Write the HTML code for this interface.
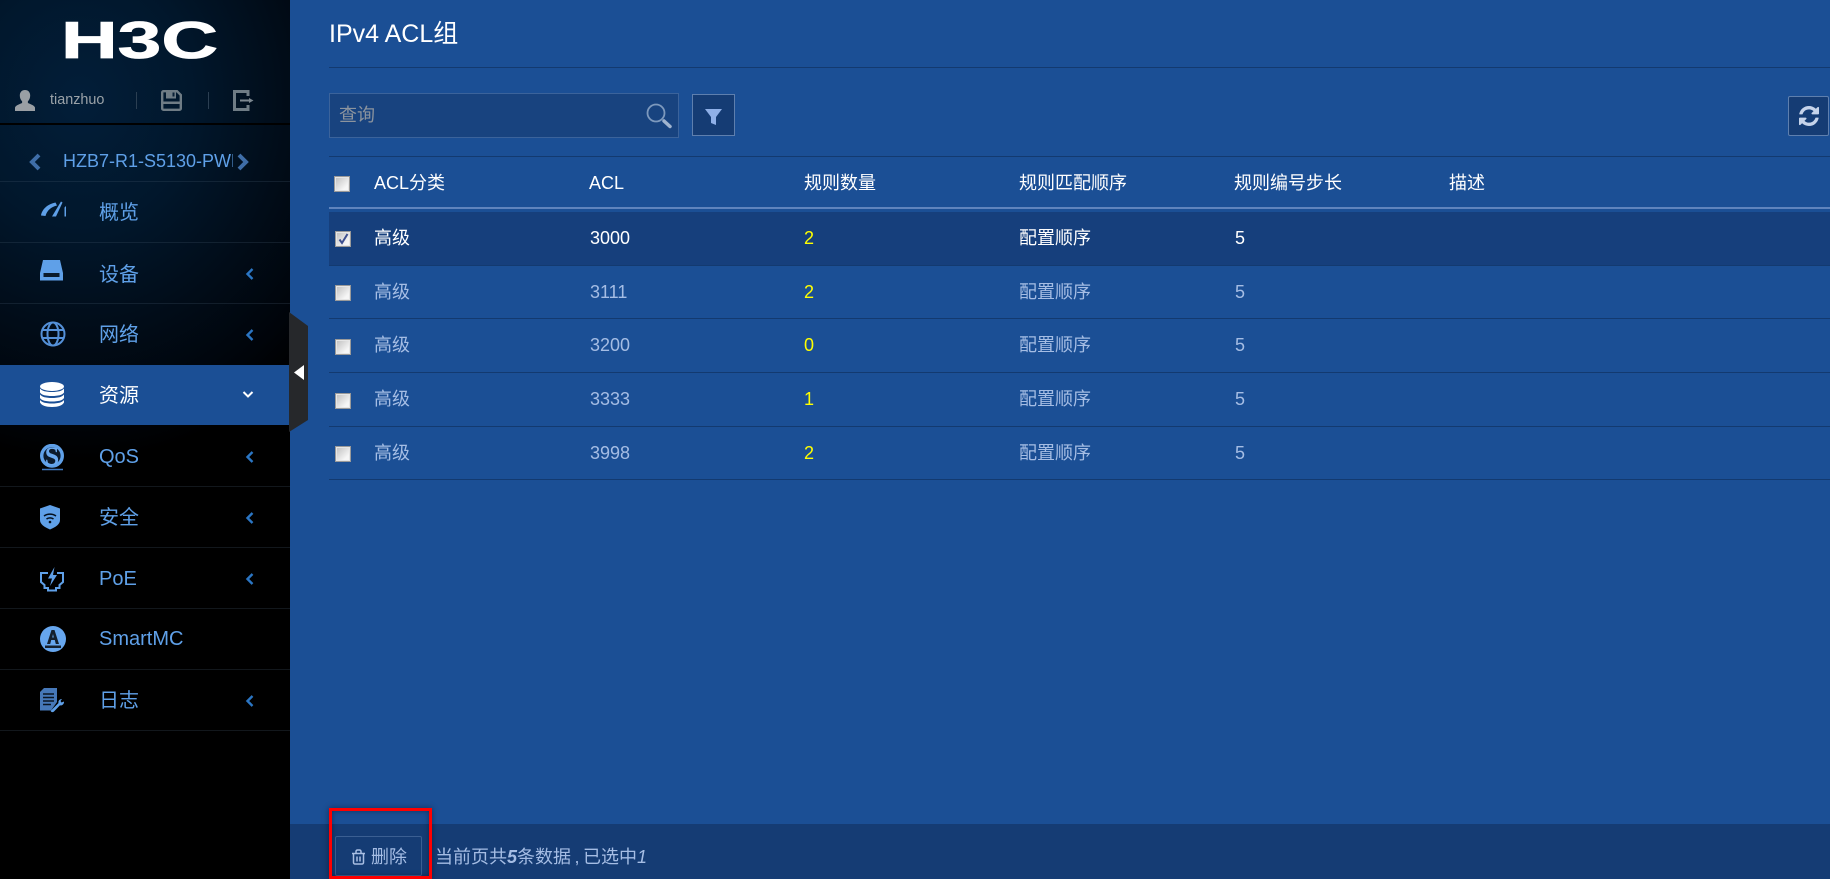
<!DOCTYPE html>
<html lang="zh">
<head>
<meta charset="utf-8">
<title>IPv4 ACL组</title>
<style>
*{box-sizing:border-box}
html,body{margin:0;padding:0;width:1830px;height:879px;overflow:hidden;background:#1b4f95;font-family:"Liberation Sans","Noto Sans CJK SC",sans-serif}
.a{position:absolute;white-space:nowrap}
#side{position:absolute;left:0;top:0;width:290px;height:879px;background:radial-gradient(ellipse 320px 360px at 80px 100px,#021e39 0%,#01172c 35%,#010c18 65%,#00040a 88%,#000 100%),#000}
.div{position:absolute;left:0;width:290px;height:1px;background:rgba(70,90,110,.26)}
.nav{position:absolute;left:99px;font-size:20px;line-height:24px;color:#5fa0e8}
.ar{position:absolute;left:245px}
.ic{position:absolute;left:40px}
.th{position:absolute;top:171px;font-size:18px;line-height:24px;color:#fff}
.td{position:absolute;font-size:18px;line-height:24px;color:#a5bde4}
.sel{color:#fff}
.y{color:#ffff00}
.ln{position:absolute;left:329px;width:1501px;height:1px;background:#133a70}
.cb{position:absolute;left:335px;width:16px;height:16px;border:1px solid #9a9a9a;background:linear-gradient(135deg,#bdbdbd,#f6f6f6 75%);box-shadow:inset 0 0 0 1px #e6e6e6}
</style>
</head>
<body>
<div id="side">
  <svg class="a" style="left:65px;top:21px;overflow:visible" width="150" height="37" viewBox="0 0 150 37"><text x="-4" y="37" font-family="Liberation Sans" font-weight="700" font-size="52" fill="#fff" stroke="#fff" stroke-width=".8" textLength="157" lengthAdjust="spacingAndGlyphs">H3C</text></svg>

  <svg class="a" style="left:15px;top:90px" width="20" height="21" viewBox="0 0 20 21"><path d="M10 0c3.200 0 5.200 2.300 5.200 5.500 0 2.500-1 4.500-2.300 5.800v1.700c2 1 6.100 2 7.100 4.500V21H0v-3.500c1-2.500 5.100-3.500 7.100-4.500v-1.700C5.800 10 4.800 8 4.800 5.500 4.800 2.300 6.800 0 10 0z" fill="#9a9fa4"/></svg>
  <div class="a" style="left:50px;top:91px;font-size:14.4px;line-height:18px;color:#9aa2a8">tianzhuo</div>
  <div class="a" style="left:136px;top:92px;width:1px;height:17px;background:#2b3f52"></div>
  <svg class="a" style="left:161px;top:90px" width="21" height="21" viewBox="0 0 21 21"><path d="M1.200 2.500A1.300 1.300 0 0 1 2.500 1.200H16l3.800 3.800v13.500a1.300 1.300 0 0 1-1.300 1.300h-16a1.300 1.300 0 0 1-1.300-1.300z" fill="none" stroke="#6f7c85" stroke-width="2.400"/><path d="M5 1h10v7.500H5z" fill="#6f7c85"/><path d="M11.500 2.500h2v4h-2z" fill="#0a2036"/><path d="M2 11.500h17V14H2z" fill="#6f7c85"/></svg>
  <div class="a" style="left:208px;top:92px;width:1px;height:17px;background:#2b3f52"></div>
  <svg class="a" style="left:233px;top:90px" width="21" height="21" viewBox="0 0 21 21"><path d="M15 6V1.500H1.500v18H15V15" fill="none" stroke="#6f7c85" stroke-width="3"/><path d="M7 10.500h9" stroke="#7d8890" stroke-width="2"/><path d="M16 8l4.500 2.500L16 13z" fill="#7d8890"/></svg>

  <div class="a" style="left:0;top:123px;width:290px;height:2px;background:#000"></div>

  <svg class="a" style="left:28px;top:153px" width="14" height="18" viewBox="0 0 14 18"><path d="M11 2L4 9l7 7" fill="none" stroke="#3f6ea8" stroke-width="4"/></svg>
  <div class="a" style="left:63px;top:150px;width:170px;overflow:hidden;font-size:18px;line-height:22px;color:#5fa0e8">HZB7-R1-S5130-PWR</div>
  <svg class="a" style="left:236px;top:153px" width="14" height="18" viewBox="0 0 14 18"><path d="M3 2l7 7-7 7" fill="none" stroke="#3f6ea8" stroke-width="4"/></svg>

  <div class="div" style="top:181px"></div>
  <div class="div" style="top:242px"></div>
  <div class="div" style="top:303px"></div>
  <div class="div" style="top:486px"></div>
  <div class="div" style="top:547px"></div>
  <div class="div" style="top:608px"></div>
  <div class="div" style="top:669px"></div>
  <div class="div" style="top:730px"></div>

  <div class="a" style="left:0;top:365px;width:290px;height:60px;background:#1b4f95"></div>

  <!-- 概览 -->
  <svg class="ic" style="top:200px" width="27" height="18" viewBox="0 0 27 18"><path d="M1 15.500C2 9 8 4 15.500 2.500L17 5.500C11 7 7 10.500 5.500 16z" fill="#5fa0e8"/><path d="M12 16.500L21 1.500l1.500 1L16 16.500z" fill="#5fa0e8"/><path d="M24.500 7.500V16.500H26V6z" fill="#5fa0e8"/></svg>
  <div class="nav" style="top:201px">概览</div>

  <!-- 设备 -->
  <svg class="ic" style="top:260px" width="23" height="21" viewBox="0 0 23 21"><path d="M3 0h17l3 13v7.500H0V13z" fill="#5fa0e8"/><path d="M3.500 13h16v4h-16z" fill="#0a1a2a"/></svg>
  <div class="nav" style="top:263px">设备</div>
  <svg class="ar" style="top:267px" width="9" height="14" viewBox="0 0 9 14"><path d="M7.500 2L2.500 7l5 5" fill="none" stroke="#2b76c4" stroke-width="2.400"/></svg>

  <!-- 网络 -->
  <svg class="ic" style="top:321px" width="26" height="26" viewBox="0 0 26 26"><g fill="none" stroke="#5490d8" stroke-width="2"><circle cx="13" cy="13" r="11.500"/><ellipse cx="13" cy="13" rx="5.500" ry="11.500"/><path d="M2 9h22M2 17h22"/></g></svg>
  <div class="nav" style="top:323px">网络</div>
  <svg class="ar" style="top:328px" width="9" height="14" viewBox="0 0 9 14"><path d="M7.500 2L2.500 7l5 5" fill="none" stroke="#2b76c4" stroke-width="2.400"/></svg>

  <!-- 资源 -->
  <svg class="ic" style="top:382px" width="24" height="25" viewBox="0 0 24 25"><g fill="#fff"><ellipse cx="12" cy="4.500" rx="12" ry="4.500"/><path d="M0 6.500c2 2.500 6 3.500 12 3.500s10-1 12-3.500v4c-1.500 2.500-6 3.500-12 3.500S1.500 13 0 10.500z"/><path d="M0 12.500c2 2.500 6 3.500 12 3.500s10-1 12-3.500v3.500c-1.500 2.500-6 3.500-12 3.500S1.500 18.500 0 16z"/><path d="M0 18c2 2.500 6 3.500 12 3.500s10-1 12-3.500v2.500c-1.500 3-6 4.500-12 4.500S1.500 23.500 0 20.500z"/></g></svg>
  <div class="nav" style="top:384px;color:#fff">资源</div>
  <svg class="a" style="left:242px;top:390px" width="12" height="9" viewBox="0 0 12 9"><path d="M1.500 2l4.500 4.500L10.500 2" fill="none" stroke="#fff" stroke-width="2"/></svg>

  <!-- QoS -->
  <svg class="ic" style="top:444px" width="25" height="27" viewBox="0 0 25 27"><circle cx="12" cy="11.800" r="10.300" fill="#0b1a2c" stroke="#5fa0e8" stroke-width="3.400"/><text x="12" y="21" text-anchor="middle" font-family="Liberation Serif" font-weight="700" font-size="26" fill="#6aa8ee">S</text><path d="M2 25.500h21" stroke="#3f78bf" stroke-width="1.500"/></svg>
  <div class="nav" style="top:445px">QoS</div>
  <svg class="ar" style="top:450px" width="9" height="14" viewBox="0 0 9 14"><path d="M7.500 2L2.500 7l5 5" fill="none" stroke="#2b76c4" stroke-width="2.400"/></svg>

  <!-- 安全 -->
  <svg class="ic" style="top:505px" width="20" height="25" viewBox="0 0 20 25"><path d="M10 0l10 3.500V15c0 4-4 7-10 9.500C4 22 0 19 0 15V3.500z" fill="#5fa0e8"/><g fill="none" stroke="#04101e" stroke-width="1.500"><path d="M4 11c3.500-2.500 8.500-2.500 12 0"/><path d="M6.500 14c2-1.500 5-1.500 7 0"/></g><circle cx="10" cy="17" r="1.300" fill="#04101e"/></svg>
  <div class="nav" style="top:506px">安全</div>
  <svg class="ar" style="top:511px" width="9" height="14" viewBox="0 0 9 14"><path d="M7.500 2L2.500 7l5 5" fill="none" stroke="#2b76c4" stroke-width="2.400"/></svg>

  <!-- PoE -->
  <svg class="ic" style="top:566px" width="24" height="26" viewBox="0 0 24 26"><path d="M8 7H1v9l3.500 3v3H8v2.500h8V22h3.500v-3l3.500-3V7h-6" fill="none" stroke="#5fa0e8" stroke-width="2"/><path d="M14.500 1L8 12.500h4L10 20l7-11h-4z" fill="#5fa0e8"/></svg>
  <div class="nav" style="top:567px">PoE</div>
  <svg class="ar" style="top:572px" width="9" height="14" viewBox="0 0 9 14"><path d="M7.500 2L2.500 7l5 5" fill="none" stroke="#2b76c4" stroke-width="2.400"/></svg>

  <!-- SmartMC -->
  <svg class="ic" style="top:626px" width="26" height="26" viewBox="0 0 26 26"><circle cx="13" cy="13" r="13" fill="#66a6ee"/><path d="M11.500 4h3l4.500 14H15.800l-1-4h-3.600l-1 4H7z" fill="#14202e"/><path d="M12.200 11.500h1.600l-.8-3.500z" fill="#66a6ee"/><path d="M5 19.500h16v2.500H5z" fill="#14202e"/></svg>
  <div class="nav" style="top:627px">SmartMC</div>

  <!-- 日志 -->
  <svg class="ic" style="top:688px" width="26" height="25" viewBox="0 0 26 25"><path d="M4 0h13v14l-6 8.500H0V4z" fill="#4678b8"/><g stroke="#0a1522" stroke-width="1.500"><path d="M3 6h11M3 9.500h11M3 13h11M3 16.500h8"/></g><path d="M11 22.500l7.500-7.500c-.5-2 1-4 3.500-4l-1.500 2 1 1.500 2.500-1c.3 2.500-2 4.500-4 3.800L14 23.500c-1.500 1.500-4 0-3-1z" fill="#5fa0e8"/></svg>
  <div class="nav" style="top:689px">日志</div>
  <svg class="ar" style="top:694px" width="9" height="14" viewBox="0 0 9 14"><path d="M7.500 2L2.500 7l5 5" fill="none" stroke="#2b76c4" stroke-width="2.400"/></svg>
</div>

<!-- collapse handle -->
<svg class="a" style="left:289px;top:312px" width="20" height="121" viewBox="0 0 20 121"><path d="M0 0L19 14V108L0 120z" fill="#26282b"/><path d="M15 53V68L5 60.500z" fill="#fff"/></svg>

<!-- title -->
<div class="a" style="left:329px;top:19px;font-size:25px;line-height:30px;color:#fff">IPv4 ACL组</div>
<div class="ln" style="top:67px"></div>

<!-- search -->
<div class="a" style="left:329px;top:93px;width:350px;height:45px;background:#18437f;border:1px solid #3b639b"></div>
<div class="a" style="left:339px;top:103px;font-size:18px;line-height:24px;color:#8c949e">查询</div>
<svg class="a" style="left:645px;top:102px" width="28" height="28" viewBox="0 0 28 28"><circle cx="11" cy="11" r="8.500" fill="none" stroke="#7d99bd" stroke-width="1.800"/><path d="M19 19l6 5.500" stroke="#a0b4cf" stroke-width="3.500" stroke-linecap="round"/></svg>

<div class="a" style="left:692px;top:94px;width:43px;height:42px;background:#153c74;border:1px solid #5e7fae"></div>
<svg class="a" style="left:704px;top:108px" width="20" height="18" viewBox="0 0 20 18"><path d="M1 1h17l-6 8v8l-5-2V9z" fill="#8fb0e8"/></svg>

<div class="a" style="left:1788px;top:96px;width:41px;height:40px;background:#153c74;border:1px solid #5e7fae;border-radius:2px"></div>
<svg class="a" style="left:1799px;top:106px" width="20" height="20" viewBox="0 0 1536 1536"><path fill="#c5d3ea" d="M1511 928q0 5-1 7-64 268-268 434.500T764 1536q-146 0-282.500-55T238 1324l-129 129q-19 19-45 19t-45-19-19-45V960q0-26 19-45t45-19h448q26 0 45 19t19 45-19 45L420 1142q71 66 161 102t187 36q134 0 250-65t186-179q11-17 53-117 8-23 30-23h192q13 0 22.500 9.500t9.500 22.500zm25-800v448q0 26-19 45t-45 19h-448q-26 0-45-19t-19-45 19-45l138-138Q969 256 768 256q-134 0-250 65T332 500q-11 17-53 117-8 23-30 23H50q-13 0-22.500-9.500T18 608v-7q65-268 270-434.500T768 0q146 0 284 55.500T1297 212l130-129q19-19 45-19t45 19 19 45z"/></svg>

<div class="ln" style="top:156px"></div>

<!-- header -->
<div class="cb" style="top:176px;left:334px"></div>
<div class="th" style="left:374px">ACL分类</div>
<div class="th" style="left:589px">ACL</div>
<div class="th" style="left:804px">规则数量</div>
<div class="th" style="left:1019px">规则匹配顺序</div>
<div class="th" style="left:1234px">规则编号步长</div>
<div class="th" style="left:1449px">描述</div>
<div class="a" style="left:329px;top:207px;width:1501px;height:2px;background:#5f84bd"></div>

<!-- row 1 -->
<div class="a" style="left:329px;top:212px;width:1501px;height:53px;background:#163f7c"></div>
<div class="cb" style="top:231px"></div>
<svg class="a" style="left:338px;top:233px" width="11" height="12" viewBox="0 0 11 12"><path d="M1.500 6.500L4 10 9.500 1" fill="none" stroke="#3d4f8f" stroke-width="2"/></svg>
<div class="td sel" style="left:374px;top:226px">高级</div>
<div class="td sel" style="left:590px;top:226px">3000</div>
<div class="td y" style="left:804px;top:226px">2</div>
<div class="td sel" style="left:1019px;top:226px">配置顺序</div>
<div class="td sel" style="left:1235px;top:226px">5</div>
<div class="ln" style="top:265px"></div>

<!-- row 2 -->
<div class="cb" style="top:285px"></div>
<div class="td" style="left:374px;top:280px">高级</div>
<div class="td" style="left:590px;top:280px">3111</div>
<div class="td y" style="left:804px;top:280px">2</div>
<div class="td" style="left:1019px;top:280px">配置顺序</div>
<div class="td" style="left:1235px;top:280px">5</div>
<div class="ln" style="top:318px"></div>

<!-- row 3 -->
<div class="cb" style="top:339px"></div>
<div class="td" style="left:374px;top:333px">高级</div>
<div class="td" style="left:590px;top:333px">3200</div>
<div class="td y" style="left:804px;top:333px">0</div>
<div class="td" style="left:1019px;top:333px">配置顺序</div>
<div class="td" style="left:1235px;top:333px">5</div>
<div class="ln" style="top:372px"></div>

<!-- row 4 -->
<div class="cb" style="top:393px"></div>
<div class="td" style="left:374px;top:387px">高级</div>
<div class="td" style="left:590px;top:387px">3333</div>
<div class="td y" style="left:804px;top:387px">1</div>
<div class="td" style="left:1019px;top:387px">配置顺序</div>
<div class="td" style="left:1235px;top:387px">5</div>
<div class="ln" style="top:426px"></div>

<!-- row 5 -->
<div class="cb" style="top:446px"></div>
<div class="td" style="left:374px;top:441px">高级</div>
<div class="td" style="left:590px;top:441px">3998</div>
<div class="td y" style="left:804px;top:441px">2</div>
<div class="td" style="left:1019px;top:441px">配置顺序</div>
<div class="td" style="left:1235px;top:441px">5</div>
<div class="ln" style="top:479px"></div>

<!-- footer -->
<div class="a" style="left:290px;top:824px;width:1540px;height:55px;background:#153c74"></div>
<div class="a" style="left:335px;top:836px;width:87px;height:40px;border:1px solid #3b5f92;border-radius:2px"></div>
<svg class="a" style="left:351px;top:849px" width="15" height="16" viewBox="0 0 15 16"><path d="M2.500 5v8.500A1.500 1.500 0 0 0 4 15h7a1.500 1.500 0 0 0 1.500-1.500V5M1 4.500h13M5 4V2.500A1.500 1.500 0 0 1 6.500 1h2A1.500 1.500 0 0 1 10 2.500V4M6 7.500V12.500M9 7.500V12.500" fill="none" stroke="#a9bfe3" stroke-width="1.500"/></svg>
<div class="td" style="left:371px;top:845px">删除</div>
<div class="td" style="left:435px;top:845px">当前页共<i style="font-weight:700">5</i>条数据<span style="display:inline-block;width:12px;text-align:center">,</span>已选中<i>1</i></div>
<div class="a" style="left:329px;top:808px;width:103px;height:71px;border:3px solid #f00;box-shadow:0 0 6px rgba(0,0,0,.4),inset 0 0 6px rgba(0,0,0,.35)"></div>
</body>
</html>
